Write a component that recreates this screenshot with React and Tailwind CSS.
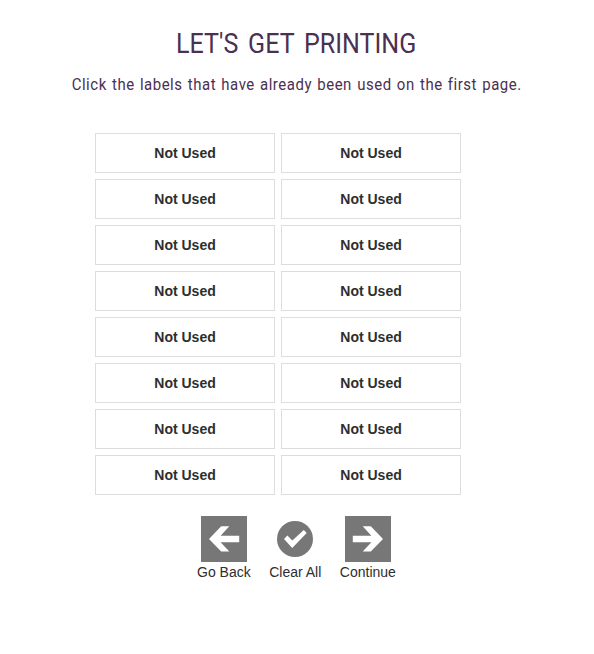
import React from "react";

const labels = Array.from({ length: 16 }, (_, i) => i);

function ArrowIcon({ right = false }) {
  return (
    <svg viewBox="0 0 46 46" className={`block size-[46px] bg-[#777777] ${right ? "-scale-x-100" : ""}`}>
      <path d="M8 23 20.2 10.3H28.3L19.6 19.7H38.2V26.3H19.6L28.3 35.6H20.2Z" fill="#fff" />
    </svg>
  );
}

function CheckIcon() {
  return (
    <svg viewBox="0 0 46 46" className="block size-[46px]">
      <circle cx="23" cy="23" r="18" fill="#777777" />
      <path d="M12 22.9 15.4 19.4 20.3 24.4 31.8 13.9 34.7 17.1 20.2 32Z" fill="#fff" />
    </svg>
  );
}

function Action({ label, children }) {
  return (
    <button type="button" className="flex flex-col items-center whitespace-nowrap">
      {children}
      <span className="text-[14px] leading-5">{label}</span>
    </button>
  );
}

export default function App() {
  return (
    <main className="h-[654px] w-[594px] overflow-hidden bg-white pt-6 font-['Liberation_Sans',Arial,sans-serif] text-[#2e2e2e]">
      <header className="flex flex-col items-center font-['Roboto',sans-serif] whitespace-nowrap text-[#4b3052]">
        <h1 className="mr-px scale-x-[0.895] text-[28px] leading-10 [word-spacing:4px]">LET'S GET PRINTING</h1>
        <p className="mt-2 scale-x-[0.88] text-[17px] leading-6 tracking-[0.6px] [word-spacing:1.15px]">
          Click the labels that have already been used on the first page.
        </p>
      </header>
      <div className="mt-[37px] ml-[95px] grid w-[366px] grid-cols-2 gap-1.5">
        {labels.map((id) => (
          <button key={id} type="button" className="h-10 border border-[#dddddd] text-[14px] leading-5 font-bold">
            Not Used
          </button>
        ))}
      </div>
      <nav className="mt-[21px] ml-[197px] flex gap-[18.5px]">
        <Action label="Go Back"><ArrowIcon /></Action>
        <Action label="Clear All"><CheckIcon /></Action>
        <Action label="Continue"><ArrowIcon right /></Action>
      </nav>
    </main>
  );
}
